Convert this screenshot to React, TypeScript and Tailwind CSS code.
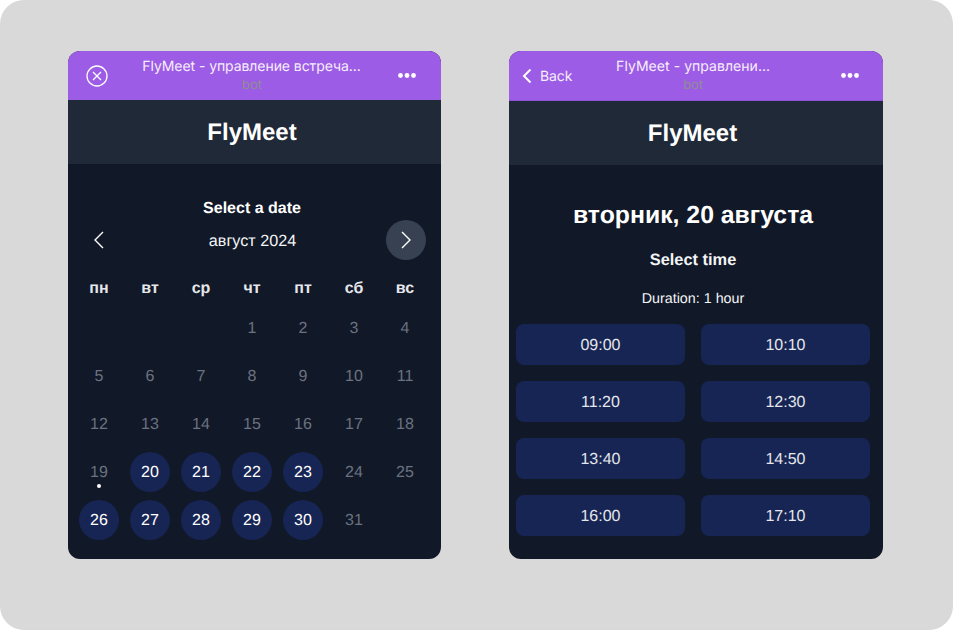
const sans = 'font-["Liberation_Sans",Arial,sans-serif]';

const dayNames = ['пн', 'вт', 'ср', 'чт', 'пт', 'сб', 'вс'];
const activeDays = [20, 21, 22, 23, 26, 27, 28, 29, 30];
const times = ['09:00', '10:10', '11:20', '12:30', '13:40', '14:50', '16:00', '17:10'];

function Dots() {
  return (
    <svg width="18" height="5" viewBox="0 0 18 5" fill="white">
      <circle cx="2.5" cy="2.5" r="2.4" />
      <circle cx="9" cy="2.5" r="2.4" />
      <circle cx="15.5" cy="2.5" r="2.4" />
    </svg>
  );
}

function CloseIcon() {
  return (
    <svg width="22" height="22" viewBox="0 0 22 22" fill="none" stroke="white" strokeWidth="1.3">
      <circle cx="11" cy="11" r="10" />
      <path d="M7 7l8 8M15 7l-8 8" />
    </svg>
  );
}

function Chevron({ dir }: { dir: 'left' | 'right' }) {
  return (
    <svg width="12" height="18" viewBox="0 0 12 18" fill="none" stroke="white" strokeWidth="1.4">
      <path d={dir === 'left' ? 'M10 1L2 9l8 8' : 'M2 1l8 8-8 8'} />
    </svg>
  );
}

function Calendar() {
  const cells: (number | null)[] = [null, null, null];
  for (let d = 1; d <= 31; d++) cells.push(d);

  return (
    <div className="flex flex-col items-center pl-[11px] pr-[16px] pt-[34px]">
      <div className="pt-[1px] text-[16px] leading-[20px] font-bold text-white">Select a date</div>
      <div className="mt-[1px] flex h-[40px] w-[calc(100%+1px)] items-center justify-between self-start">
        <div className="flex h-[40px] w-[40px] items-center justify-center pr-[1px]"><Chevron dir="left" /></div>
        <div className="pt-[2px] text-[16.2px] text-[#f3f4f6]">август 2024</div>
        <div className="flex h-[40px] w-[40px] items-center justify-center rounded-full bg-[#374151]"><Chevron dir="right" /></div>
      </div>
      <div className="mt-[13px] grid w-full grid-cols-[repeat(7,40px)] justify-between">
        {dayNames.map((d) => (
          <div key={d} className="h-[32px] text-center text-[16px] leading-[32px] font-bold text-[#e5e7eb]">{d}</div>
        ))}
      </div>
      <div className="mt-[3px] grid w-full grid-cols-[repeat(7,40px)] justify-between gap-y-[8px]">
        {cells.map((d, i) => {
          if (d === null) return <div key={i} className="h-[40px]" />;
          const active = activeDays.includes(d);
          return (
            <div
              key={i}
              className={`relative flex h-[40px] w-[40px] items-center justify-center rounded-full pt-[2px] text-[16px] ${active ? 'bg-[#172554] text-white' : 'text-[#6b7280]'}`}
            >
              {d}
              {d === 19 && <span className="absolute bottom-[4px] h-[4px] w-[4px] rounded-full bg-white" />}
            </div>
          );
        })}
      </div>
    </div>
  );
}

function TimePicker() {
  return (
    <div className="flex flex-col items-center pl-[7px] pr-[13px] pt-[35px]">
      <div className="text-[24.8px] leading-[32px] font-bold text-white">вторник, 20 августа</div>
      <div className="mt-[16px] text-[16.4px] leading-[24px] font-bold text-[#f3f4f6]">Select time</div>
      <div className="mt-[17px] text-[14.3px] leading-[20px] text-[#f3f4f6]">Duration: 1 hour</div>
      <div className="mt-[15px] grid w-full grid-cols-2 gap-[16px]">
        {times.map((t) => (
          <div key={t} className="flex h-[41px] items-center justify-center rounded-[8px] bg-[#172554] pt-[2px] text-[16px] text-[#e5e7eb]">{t}</div>
        ))}
      </div>
    </div>
  );
}

export default function App() {
  return (
    <div className={`${sans} h-[630px] w-[953px] overflow-hidden bg-white [text-rendering:geometricPrecision]`}>
      <div className="flex h-full items-start gap-[68px] rounded-[24px] bg-[#d9d9d9] pl-[68px] pt-[51px]">
        {/* left window */}
        <div className="h-[508px] w-[373px] overflow-hidden rounded-[12px] bg-[#111827]">
          <div className="flex h-[49px] items-center justify-between bg-[#9d5ce5] pl-[18px] pr-[25px] font-['Inter',sans-serif]">
            <CloseIcon />
            <div className="mr-[3px] flex flex-col items-center text-center">
              <div className="text-[14px] leading-[18px] tracking-[-0.07px] text-[#f5eefc]">FlyMeet - управление встреча...</div>
              <div className="ml-[1px] text-[13px] leading-[18px] text-[#8e8e93]">bot</div>
            </div>
            <Dots />
          </div>
          <div className="flex h-[64px] items-center justify-center bg-[#1f2937] pt-[2px] pr-[5px] text-[24px] font-bold text-white">FlyMeet</div>
          <Calendar />
        </div>

        {/* right window */}
        <div className="h-[508px] w-[374px] overflow-hidden rounded-[12px] bg-[#111827]">
          <div className="flex h-[50px] items-center justify-between border-b border-[#8f52d4] bg-[#9d5ce5] pl-[13px] pr-[24px] font-['Inter',sans-serif]">
            <div className="mt-[1px] flex items-center gap-[8px] text-[14px] tracking-[-0.1px] text-[#f5eefc]">
              <svg width="10" height="16" viewBox="0 0 10 16" fill="none" stroke="white" strokeWidth="2"><path d="M8.5 1.5L2 8l6.5 6.5" /></svg>
              Back
            </div>
            <div className="mr-[27px] flex flex-col items-center text-center">
              <div className="text-[14px] leading-[18px] tracking-[0.05px] text-[#f5eefc]">FlyMeet - управлени...</div>
              <div className="text-[13px] leading-[18px] text-[#8e8e93]">bot</div>
            </div>
            <Dots />
          </div>
          <div className="flex h-[64px] items-center justify-center bg-[#1f2937] pt-[2px] pr-[7px] text-[24px] font-bold text-white">FlyMeet</div>
          <TimePicker />
        </div>
      </div>
    </div>
  );
}
